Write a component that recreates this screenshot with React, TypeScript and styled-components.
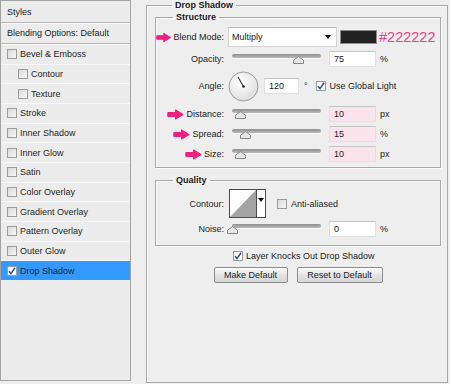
import React from 'react'
import styled, { createGlobalStyle } from 'styled-components'

const GlobalStyle = createGlobalStyle`
  html, body {
    margin: 0;
    padding: 0;
    background: #eeeeee;
  }
  body {
    font-family: "Liberation Sans", Arial, sans-serif;
    font-size: 9px;
    color: #222;
  }
`

const Page = styled.div`
  width: 450px;
  height: 384px;
  display: flex;
  align-items: flex-start;
  gap: 15px;
  overflow: hidden;
`

/* ---------- left styles list ---------- */

const StylesPanel = styled.div`
  width: 131px;
  height: 381px;
  box-sizing: border-box;
  border: 1px solid #a3a3a3;
  background: #ececec;
  display: flex;
  flex-direction: column;
`

const HeaderRow = styled.div<{ $h: number }>`
  height: ${p => p.$h}px;
  display: flex;
  align-items: center;
  padding-left: 6px;
  border-bottom: 1px solid #b7b7b7;
  box-shadow: 0 1px 0 #fbfbfb;
  flex-shrink: 0;
`

const ListRow = styled.div<{ $level: number; $selected?: boolean }>`
  height: 18.67px;
  flex-shrink: 0;
  display: flex;
  align-items: center;
  gap: 3px;
  padding-left: ${p => (p.$level ? 17 : 6)}px;
  border-top: 1px solid #f8f8f8;
  background: ${p => (p.$selected ? '#3399ff' : 'transparent')};
  color: #1e1e1e;
`

const Box = styled.span<{ $checked?: boolean }>`
  width: 10px;
  height: 10px;
  box-sizing: border-box;
  border: 1px solid #9c9c9c;
  background: ${p => (p.$checked ? '#fff' : 'linear-gradient(135deg, #d9d9d9, #f7f7f7)')};
  display: inline-flex;
  align-items: center;
  justify-content: center;
  flex-shrink: 0;
`

const Check = ({ checked }: { checked?: boolean }) => (
  <Box $checked={checked}>
    {checked && (
      <svg width="8" height="8" viewBox="0 0 8 8">
        <path d="M1 4.2 L3 6.6 L7 0.8" fill="none" stroke="#2b4a9e" strokeWidth="1.5" />
      </svg>
    )}
  </Box>
)

const styleItems: { name: string; level: number; checked?: boolean; selected?: boolean }[] = [
  { name: 'Bevel & Emboss', level: 0 },
  { name: 'Contour', level: 1 },
  { name: 'Texture', level: 1 },
  { name: 'Stroke', level: 0 },
  { name: 'Inner Shadow', level: 0 },
  { name: 'Inner Glow', level: 0 },
  { name: 'Satin', level: 0 },
  { name: 'Color Overlay', level: 0 },
  { name: 'Gradient Overlay', level: 0 },
  { name: 'Pattern Overlay', level: 0 },
  { name: 'Outer Glow', level: 0 },
  { name: 'Drop Shadow', level: 0, checked: true, selected: true },
]

/* ---------- right settings ---------- */

const Group = styled.fieldset`
  margin: 0;
  width: 302px;
  height: 383px;
  box-sizing: border-box;
  padding: 2px 6px 0 8px;
  border: 1px solid #a9a9a9;
  box-shadow: inset 1px 1px 0 #fafafa;
`

const SubGroup = styled.fieldset<{ $top?: number }>`
  margin: ${p => p.$top ?? 0}px 0 0 0;
  padding: 0;
  border: 1px solid #a9a9a9;
  box-shadow: inset 1px 1px 0 #fafafa, 1px 1px 0 #fafafa;
  display: flex;
  flex-direction: column;
`

const Legend = styled.legend`
  margin-left: 17px;
  padding: 0 3px;
  line-height: 10px;
  font-weight: bold;
  color: #1a1a1a;
`

const Row = styled.div<{ $h: number; $top?: number }>`
  height: ${p => p.$h}px;
  margin-top: ${p => p.$top ?? 0}px;
  display: flex;
  align-items: center;
  flex-shrink: 0;
`

const Label = styled.div`
  width: 68px;
  flex-shrink: 0;
  display: flex;
  justify-content: flex-end;
  align-items: center;
  gap: 2px;
  white-space: nowrap;
`

const PinkArrow = () => (
  <svg width="17" height="11" viewBox="0 0 17 11">
    <path
      d="M0.8 3.5 H8.5 V0.8 L16.2 5.5 L8.5 10.2 V7.5 H0.8 Z"
      fill="#ef1f80"
      stroke="#ef1f80"
      strokeWidth="1"
      strokeLinejoin="round"
    />
  </svg>
)

const Select = styled.div`
  margin-left: 4px;
  width: 109px;
  height: 20px;
  box-sizing: border-box;
  background: #fff;
  border: 1px solid #d2d2d2;
  border-top-color: #bdbdbd;
  display: flex;
  align-items: center;
  justify-content: space-between;
  padding: 0 5px 0 3px;
`

const Caret = styled.span`
  width: 0;
  height: 0;
  border-left: 3.5px solid transparent;
  border-right: 3.5px solid transparent;
  border-top: 4px solid #111;
`

const Swatch = styled.div`
  margin-left: 3px;
  width: 37px;
  height: 14px;
  box-sizing: border-box;
  background: #222222;
  border: 1px solid #8e8e8e;
`

const HexNote = styled.span`
  margin-left: 2px;
  font-size: 14.5px;
  color: #ef3d8c;
`

const SliderBox = styled.div<{ $left?: number }>`
  position: relative;
  margin-left: ${p => p.$left ?? 8}px;
  width: 89px;
  height: 12px;
  flex-shrink: 0;
`

const Track = styled.div`
  margin-top: 1px;
  height: 4px;
  border-radius: 2px;
  background: linear-gradient(#8f8f8f, #b9b9b9);
  box-shadow: 0 1px 0 #fafafa;
`

const Thumb = styled.svg`
  position: absolute;
  top: 3px;
`

const Slider = ({ pct, left }: { pct: number; left?: number }) => (
  <SliderBox $left={left}>
    <Track />
    <Thumb width="11" height="8" viewBox="0 0 11 8" style={{ left: 89 * pct - 5.5 }}>
      <path d="M0.5 7.5 V4.2 L5.5 0.6 L10.5 4.2 V7.5 Z" fill="#e6e6e6" stroke="#868686" />
    </Thumb>
  </SliderBox>
)

const Field = styled.div<{ $w?: number; $pink?: boolean; $left?: number }>`
  margin-left: ${p => p.$left ?? 8}px;
  width: ${p => p.$w ?? 47}px;
  height: 16px;
  box-sizing: border-box;
  padding-left: 4px;
  display: flex;
  align-items: center;
  background: ${p => (p.$pink ? '#fde3ec' : '#fff')};
  border: 1px solid #e0e0e0;
  border-top-color: #c4c4c4;
  flex-shrink: 0;
`

const Unit = styled.span<{ $left?: number }>`
  margin-left: ${p => p.$left ?? 4}px;
`

const CheckLabel = styled.label<{ $left?: number }>`
  margin-left: ${p => p.$left ?? 0}px;
  display: flex;
  align-items: center;
  gap: 4px;
  white-space: nowrap;
`

const Dial = ({ angle }: { angle: number }) => {
  const r = (angle * Math.PI) / 180
  const x = 15.5 + Math.cos(r) * 11
  const y = 15.5 - Math.sin(r) * 11
  return (
    <svg width="31" height="31" viewBox="0 0 31 31" style={{ marginLeft: 4, flexShrink: 0 }}>
      <defs>
        <radialGradient id="dialFill" cx="0.4" cy="0.35" r="0.7">
          <stop offset="0" stopColor="#ffffff" />
          <stop offset="1" stopColor="#dcdcdc" />
        </radialGradient>
      </defs>
      <circle cx="15.5" cy="15.5" r="14.5" fill="url(#dialFill)" stroke="#9a9a9a" />
      <line x1="15.5" y1="15.5" x2={x} y2={y} stroke="#333" strokeWidth="1.1" />
      <circle cx="15.5" cy="15.5" r="1.3" fill="#222" />
    </svg>
  )
}

const ContourPicker = styled.div`
  margin-left: 5px;
  width: 37px;
  height: 29px;
  box-sizing: border-box;
  border: 1px solid #4a4a4a;
  display: flex;
  background: #fff;
`

const ContourArrow = styled.div`
  width: 9px;
  border-left: 1px solid #4a4a4a;
  display: flex;
  justify-content: center;
  padding-top: 8px;
  box-sizing: border-box;
`

const ButtonRow = styled.div`
  margin-top: 4px;
  display: flex;
  justify-content: center;
  gap: 9px;
`

const Button = styled.button<{ $w: number }>`
  width: ${p => p.$w}px;
  height: 16px;
  padding: 0;
  font: inherit;
  color: #1e1e1e;
  border: 1px solid #8d8d8d;
  border-radius: 2px;
  background: linear-gradient(#fbfbfb, #e2e2e2 55%, #d6d6d6);
  box-shadow: inset 0 1px 0 #fff;
`

const App = () => {
  return (
    <Page>
      <GlobalStyle />
      <StylesPanel>
        <HeaderRow $h={21}>Styles</HeaderRow>
        <HeaderRow $h={20}>Blending Options: Default</HeaderRow>
        {styleItems.map(item => (
          <ListRow key={item.name} $level={item.level} $selected={item.selected}>
            <Check checked={item.checked} />
            {item.name}
          </ListRow>
        ))}
      </StylesPanel>

      <Group>
        <Legend>Drop Shadow</Legend>
        <SubGroup style={{ paddingTop: 5, paddingBottom: 3 }}>
          <Legend>Structure</Legend>
          <Row $h={20}>
            <Label>
              <PinkArrow />
              Blend Mode:
            </Label>
            <Select>
              Multiply
              <Caret />
            </Select>
            <Swatch />
            <HexNote>#222222</HexNote>
          </Row>
          <Row $h={22} $top={1}>
            <Label>Opacity:</Label>
            <Slider pct={0.75} />
            <Field>75</Field>
            <Unit>%</Unit>
          </Row>
          <Row $h={32}>
            <Label>Angle:</Label>
            <Dial angle={120} />
            <Field $w={35} $left={5}>120</Field>
            <Unit $left={5}>°</Unit>
            <CheckLabel $left={8}>
              <Check checked />
              Use Global Light
            </CheckLabel>
          </Row>
          <Row $h={20} $top={2}>
            <Label>
              <PinkArrow />
              Distance:
            </Label>
            <Slider pct={0.1} />
            <Field $pink>10</Field>
            <Unit>px</Unit>
          </Row>
          <Row $h={20}>
            <Label>
              <PinkArrow />
              Spread:
            </Label>
            <Slider pct={0.15} />
            <Field $pink>15</Field>
            <Unit>%</Unit>
          </Row>
          <Row $h={20}>
            <Label>
              <PinkArrow />
              Size:
            </Label>
            <Slider pct={0.1} />
            <Field $pink>10</Field>
            <Unit>px</Unit>
          </Row>
        </SubGroup>

        <SubGroup $top={7} style={{ paddingTop: 4, paddingBottom: 7 }}>
          <Legend>Quality</Legend>
          <Row $h={29}>
            <Label>Contour:</Label>
            <ContourPicker>
              <svg width="26" height="27" viewBox="0 0 26 27">
                <path d="M0 27 L26 0 L26 27 Z" fill="#a3a3a3" />
              </svg>
              <ContourArrow>
                <Caret />
              </ContourArrow>
            </ContourPicker>
            <CheckLabel $left={11}>
              <Check />
              Anti-aliased
            </CheckLabel>
          </Row>
          <Row $h={18} $top={2}>
            <Label>Noise:</Label>
            <Slider pct={0} />
            <Field>0</Field>
            <Unit>%</Unit>
          </Row>
        </SubGroup>

        <Row $h={14} $top={3}>
          <CheckLabel $left={78} style={{ gap: 3 }}>
            <Check checked />
            Layer Knocks Out Drop Shadow
          </CheckLabel>
        </Row>
        <ButtonRow>
          <Button $w={74}>Make Default</Button>
          <Button $w={86}>Reset to Default</Button>
        </ButtonRow>
      </Group>
    </Page>
  )
}

export default App
